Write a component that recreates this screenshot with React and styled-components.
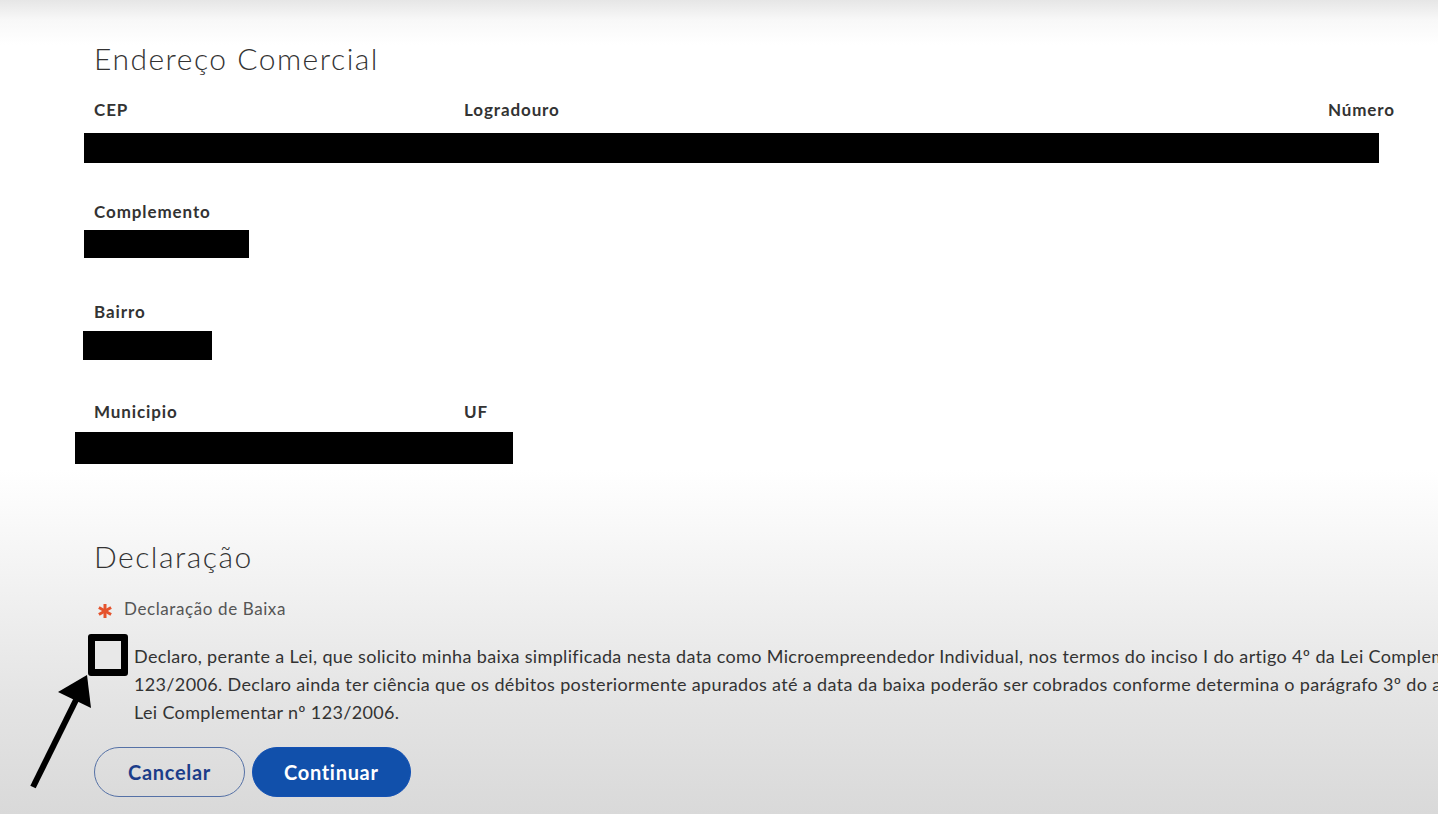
import React from 'react';
import styled, { createGlobalStyle } from 'styled-components';

const Global = createGlobalStyle`
  html, body {
    margin: 0;
    padding: 0;
    height: 814px;
    overflow: hidden;
  }
  body {
    font-family: Lato, "Open Sans", sans-serif;
    color: #333;
    background: linear-gradient(
      to bottom,
      #e6e6e6 0px,
      #f8f8f8 20px,
      #ffffff 45px,
      #ffffff 470px,
      #f1f1f1 590px,
      #e4e4e4 700px,
      #d9d9d9 814px
    );
  }
`;

const Page = styled.main`
  position: relative;
  height: 814px;
  padding: 40px 0 0 94px;
  box-sizing: border-box;
  overflow: hidden;
`;

const Heading = styled.h2`
  margin: ${p => p.$top || 0}px 0 0 0;
  font-size: 30px;
  line-height: 36px;
  font-weight: 300;
  letter-spacing: 1.5px;
  color: #333;
`;

const Field = styled.div`
  margin-top: ${p => p.$top}px;
`;

const LabelRow = styled.div`
  display: grid;
  grid-template-columns: ${p => p.$cols || '1fr'};
  width: ${p => p.$width || 'auto'};
`;

const Label = styled.span`
  font-size: 17px;
  line-height: 20px;
  font-weight: 700;
  letter-spacing: 0.9px;
  color: #333;
  text-align: ${p => p.$align || 'left'};
`;

const Redacted = styled.div`
  margin-top: ${p => p.$gap}px;
  margin-left: ${p => p.$shift}px;
  width: ${p => p.$width}px;
  height: ${p => p.$height}px;
  background: #000;
`;

const Required = styled.div`
  margin-top: 25px;
  display: flex;
  align-items: center;
  gap: 11px;
  padding-left: 3px;
  font-size: 17px;
  line-height: 20px;
  letter-spacing: 0.6px;
  color: #555;
`;

const Star = styled.svg`
  flex: none;
  margin-top: 3px;
`;

const CheckRow = styled.div`
  margin-top: 23px;
  display: flex;
  align-items: flex-start;
  gap: 6px;
  margin-left: -6px;
`;

const Checkbox = styled.div`
  flex: none;
  width: 26px;
  height: 28px;
  margin-top: -8px;
  border: 7px solid #000;
  border-radius: 3px;
  background: #e8e8e8;
`;

const Paragraph = styled.p`
  margin: 0;
  font-size: 18px;
  line-height: 28px;
  letter-spacing: 0.35px;
  color: #333;
  white-space: nowrap;
`;

const Buttons = styled.div`
  margin-top: 21px;
  display: flex;
  gap: 7px;
`;

const Button = styled.button`
  height: 50px;
  padding: 0 ${p => p.$pad}px;
  border-radius: 25px;
  font-family: Lato, "Open Sans", sans-serif;
  font-size: 20px;
  font-weight: 700;
  letter-spacing: 0.7px;
  cursor: pointer;
  border: 1px solid ${p => (p.$primary ? '#1351b4' : '#5571a6')};
  background: ${p => (p.$primary ? '#1150ab' : 'transparent')};
  color: ${p => (p.$primary ? '#fff' : '#1c3d8a')};
`;

const Arrow = styled.svg`
  position: absolute;
  left: 0;
  top: 660px;
  pointer-events: none;
`;

const App = () => {
  return (
    <>
      <Global />
      <Page>
        <Heading>Endereço Comercial</Heading>

        <Field $top={24}>
          <LabelRow $cols="370px 1fr auto" $width="1301px">
            <Label>CEP</Label>
            <Label>Logradouro</Label>
            <Label $align="right">Número</Label>
          </LabelRow>
          <Redacted $gap={13} $shift={-10} $width={1295} $height={30} />
        </Field>

        <Field $top={39}>
          <Label>Complemento</Label>
          <Redacted $gap={8} $shift={-10} $width={165} $height={28} />
        </Field>

        <Field $top={44}>
          <Label>Bairro</Label>
          <Redacted $gap={9} $shift={-11} $width={129} $height={29} />
        </Field>

        <Field $top={42}>
          <LabelRow $cols="370px auto" $width="420px">
            <Label>Municipio</Label>
            <Label>UF</Label>
          </LabelRow>
          <Redacted $gap={10} $shift={-19} $width={438} $height={32} />
        </Field>

        <Heading $top={74}>Declaração</Heading>

        <Required>
          <Star width="16" height="16" viewBox="0 0 16 16">
            <g stroke="#e5532d" strokeWidth="3" strokeLinecap="butt">
              <line x1="8" y1="1" x2="8" y2="15" />
              <line x1="1.9" y1="4.5" x2="14.1" y2="11.5" />
              <line x1="1.9" y1="11.5" x2="14.1" y2="4.5" />
            </g>
          </Star>
          <span>Declaração de Baixa</span>
        </Required>

        <CheckRow>
          <Checkbox />
          <Paragraph>
            Declaro, perante a Lei, que solicito minha baixa simplificada nesta data como Microempreendedor Individual, nos termos do inciso I do artigo 4º da Lei Complementar nº
            <br />
            123/2006. Declaro ainda ter ciência que os débitos posteriormente apurados até a data da baixa poderão ser cobrados conforme determina o parágrafo 3º do artigo 4º da
            <br />
            Lei Complementar nº 123/2006.
          </Paragraph>
        </CheckRow>

        <Buttons>
          <Button type="button" $pad={33}>Cancelar</Button>
          <Button type="button" $primary $pad={31}>Continuar</Button>
        </Buttons>

        <Arrow width="130" height="140" viewBox="0 660 130 140">
          <line x1="33" y1="787" x2="76" y2="700" stroke="#000" strokeWidth="6" strokeLinecap="butt" />
          <polygon points="87,675 58,692 91,708" fill="#000" />
        </Arrow>
      </Page>
    </>
  );
};

export default App;
